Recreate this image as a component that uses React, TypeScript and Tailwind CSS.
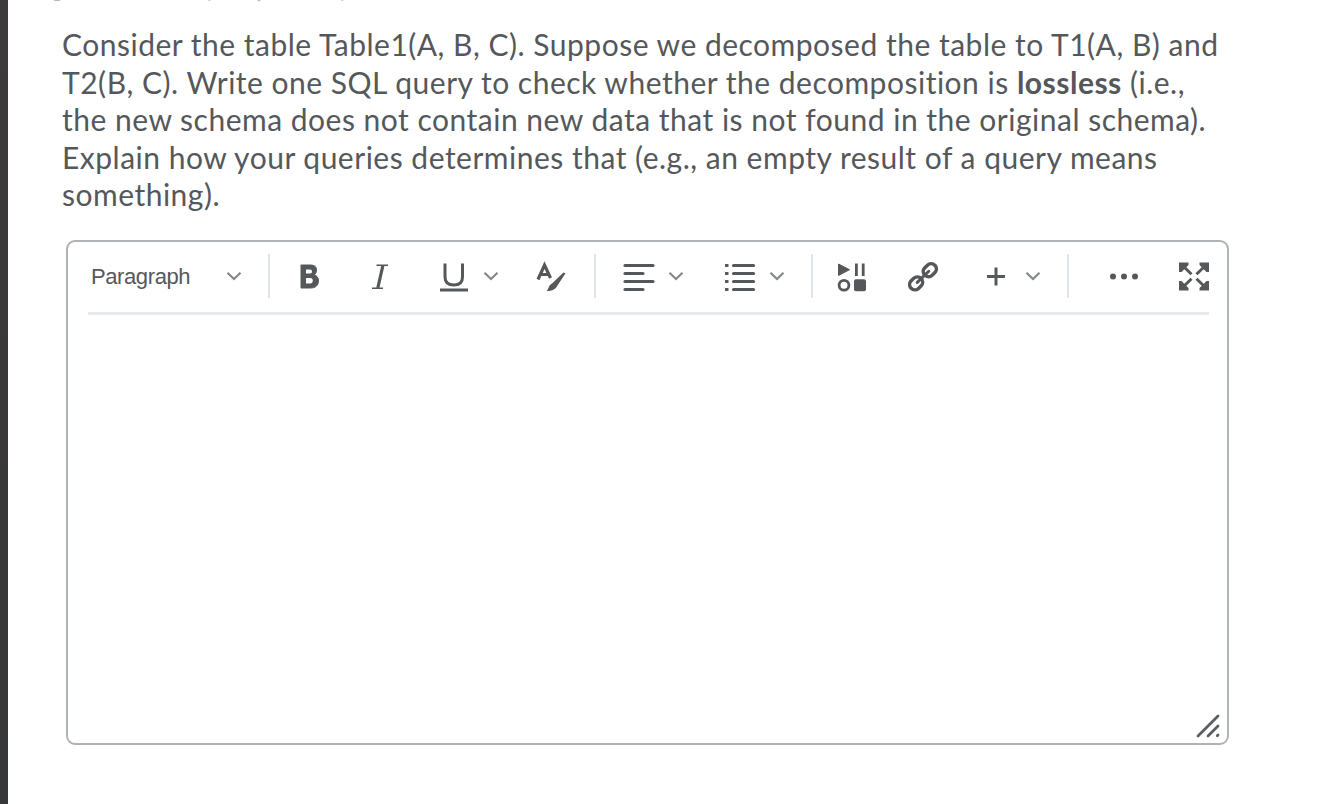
import type { ReactNode } from "react";

function Icon({ w, className, children }: { w: number; className: string; children: ReactNode }) {
  return (
    <svg
      width={w}
      height={36}
      viewBox={`0 0 ${w} 36`}
      fill="none"
      stroke="currentColor"
      className={`block shrink-0 text-[#55585b] ${className}`}
    >
      {children}
    </svg>
  );
}

function Chevron({ className }: { className: string }) {
  return (
    <Icon w={16} className={className}>
      <path d="M1.5 14.8 L8 21 L14.5 14.8" stroke="#85888b" strokeWidth="2.2" />
    </Icon>
  );
}

function Divider({ className }: { className: string }) {
  return <span className={`h-[44px] w-[2px] shrink-0 bg-[#dfe4e8] ${className}`} />;
}

function Toolbar() {
  return (
    <div className="ml-[20px] mr-[18px] flex h-[73px] items-center border-b-[3px] border-[#e5eaed] pb-[1px]">
      <span className="ml-[3px] w-[99px] shrink-0 whitespace-nowrap font-['Liberation_Sans',sans-serif] text-[22px] tracking-[-0.4px] text-[#55585b]">
        Paragraph
      </span>
      <Chevron className="ml-[36px]" />
      <Divider className="ml-[26px]" />
      <Icon w={24} className="ml-[28px]">
        <path d="M3 7 H12 C16.5 7 18.5 8.8 18.5 12 C18.5 14.5 17.5 16 16 16.7 C18.7 17.5 20.5 19.5 20.5 22.8 C20.5 27.5 17.3 30 12.5 30 H3 Z" fill="currentColor" stroke="currentColor" strokeWidth="1" />
        <path d="M8 11.4 H12 C14.8 11.4 14.8 15.4 12 15.4 H8 Z M8 20 H12.3 C15.7 20 15.7 25.4 12.3 25.4 H8 Z" fill="#fff" stroke="none" />
      </Icon>
      <Icon w={18} className="ml-[49px]">
        <path d="M5.5 7.3 H17 M1 30.2 H12" strokeWidth="1.5" />
        <path d="M11.9 7.5 L6.8 30" strokeWidth="3.2" />
      </Icon>
      <Icon w={30} className="ml-[50px]">
        <path d="M6 5.5 V19 C6 24 9 27 15 27 C20.5 27 23.5 24 23.5 19 V5.5" strokeWidth="3" />
        <path d="M1 32 H29" strokeWidth="3" />
      </Icon>
      <Chevron className="ml-[14px]" />
      <Icon w={32} className="ml-[37px]">
        <path d="M2 21.5 L8.5 7 L14.5 20 M4 16.5 H13" strokeWidth="3.2" />
        <path d="M29.5 15.2 L20.5 29 C18.5 32 14.5 33.5 10.5 33 C13 31 12.5 27 16 25.5 L27.5 14.5 Z" fill="currentColor" stroke="none" />
      </Icon>
      <Divider className="ml-[26px]" />
      <Icon w={32} className="ml-[27px]">
        <path d="M2 7.5 H30 M2 15.5 H20 M2 23.5 H30 M2 31.5 H20" strokeWidth="3.2" strokeLinecap="round" />
      </Icon>
      <Chevron className="ml-[13px]" />
      <Icon w={32} className="ml-[40px]">
        <path d="M9.5 7.5 H29.5 M9.5 15.5 H29.5 M9.5 23.5 H29.5 M9.5 31.5 H29.5" strokeWidth="3.2" strokeLinecap="round" />
        <path d="M1 7.5 H4.5 M1 15.5 H4.5 M1 23.5 H4.5 M1 31.5 H4.5" strokeWidth="3" />
      </Icon>
      <Chevron className="ml-[13px]" />
      <Divider className="ml-[26px]" />
      <Icon w={30} className="ml-[24px]">
        <path d="M1.5 6 L12.5 11.7 L1.5 17.5 Z" fill="currentColor" strokeWidth="1" />
        <path d="M19.4 5.5 V18 M26.2 5.5 V18" strokeWidth="2.8" />
        <circle cx="7" cy="27.3" r="4.9" strokeWidth="2.8" />
        <rect x="17" y="21.3" width="12" height="12" rx="2" fill="currentColor" stroke="none" />
      </Icon>
      <Icon w={30} className="ml-[41px]">
        <g transform="rotate(-44 15 18.8)" strokeWidth="3.5">
          <rect x="-1.5" y="13.5" width="14" height="10.5" rx="5.2" />
          <rect x="17.5" y="13.5" width="14" height="10.5" rx="5.2" />
          <path d="M7 18.8 H23" strokeWidth="3" strokeLinecap="round" />
        </g>
      </Icon>
      <Icon w={20} className="ml-[48px]">
        <path d="M1 18.5 H19 M10 9.5 V27.5" strokeWidth="3" />
      </Icon>
      <Chevron className="ml-[19px]" />
      <Divider className="ml-[26px]" />
      <Icon w={32} className="ml-[40px]">
        <g fill="currentColor" stroke="none">
          <circle cx="4" cy="18.5" r="3" />
          <circle cx="15" cy="18.5" r="3" />
          <circle cx="26" cy="18.5" r="3" />
        </g>
      </Icon>
      <Icon w={32} className="ml-[37px]">
        <path d="M5 8 L13.5 16.3 M27 8 L18.5 16.3 M5 29 L13.5 20.7 M27 29 L18.5 20.7" strokeWidth="3" />
        <path d="M1 4.5 H10.5 V7 L3.5 14 H1 Z M31 4.5 H21.5 V7 L28.5 14 H31 Z M1 32.5 H10.5 V30 L3.5 23 H1 Z M31 32.5 H21.5 V30 L28.5 23 H31 Z" fill="currentColor" stroke="none" />
      </Icon>
    </div>
  );
}

export default function App() {
  return (
    <div className="flex h-[804px] w-[1330px] overflow-hidden bg-white">
      <div className="w-2 shrink-0 bg-linear-to-b from-[#3e3b3c] via-[#3a3839] to-[#373839]" />
      <main className="flex flex-col">
        <svg width="400" height="4" viewBox="8 0 400 4" className="block" fill="#b4b6b8">
          <path d="M53 0 H61 L59 1 H55 Z M208 0 H211 L209 1 Z M257 0 H261 L259 1.5 Z M341 0 H344 L342 1 Z" />
        </svg>
        <div className="ml-[54px] mt-[22px] whitespace-nowrap font-['Lato',sans-serif] text-[30px] leading-[37.5px] tracking-[0.5px] text-[#55585b]">
          <p>Consider the table Table1(A, B, C). Suppose we decomposed the table to T1(A, B) and</p>
          <p>
            T2(B, C). Write one SQL query to check whether the decomposition is <b>lossless</b> (i.e.,
          </p>
          <p>the new schema does not contain new data that is not found in the original schema).</p>
          <p>Explain how your queries determines that (e.g., an empty result of a query means</p>
          <p>something).</p>
        </div>
        <section className="ml-[58px] mt-[26px] flex h-[505px] w-[1163px] flex-col rounded-[9px] border-2 border-[#b0b3b5]">
          <Toolbar />
          <div className="flex flex-1 items-end justify-end pb-[5px] pr-[7px]">
            <svg width="24" height="24" viewBox="0 0 24 24" stroke="#5b5e61" strokeWidth="2.8" strokeLinecap="round">
              <path d="M2 22 L22 2 M12 22 L22 12 M21.3 21.7 L22 21" />
            </svg>
          </div>
        </section>
      </main>
    </div>
  );
}
